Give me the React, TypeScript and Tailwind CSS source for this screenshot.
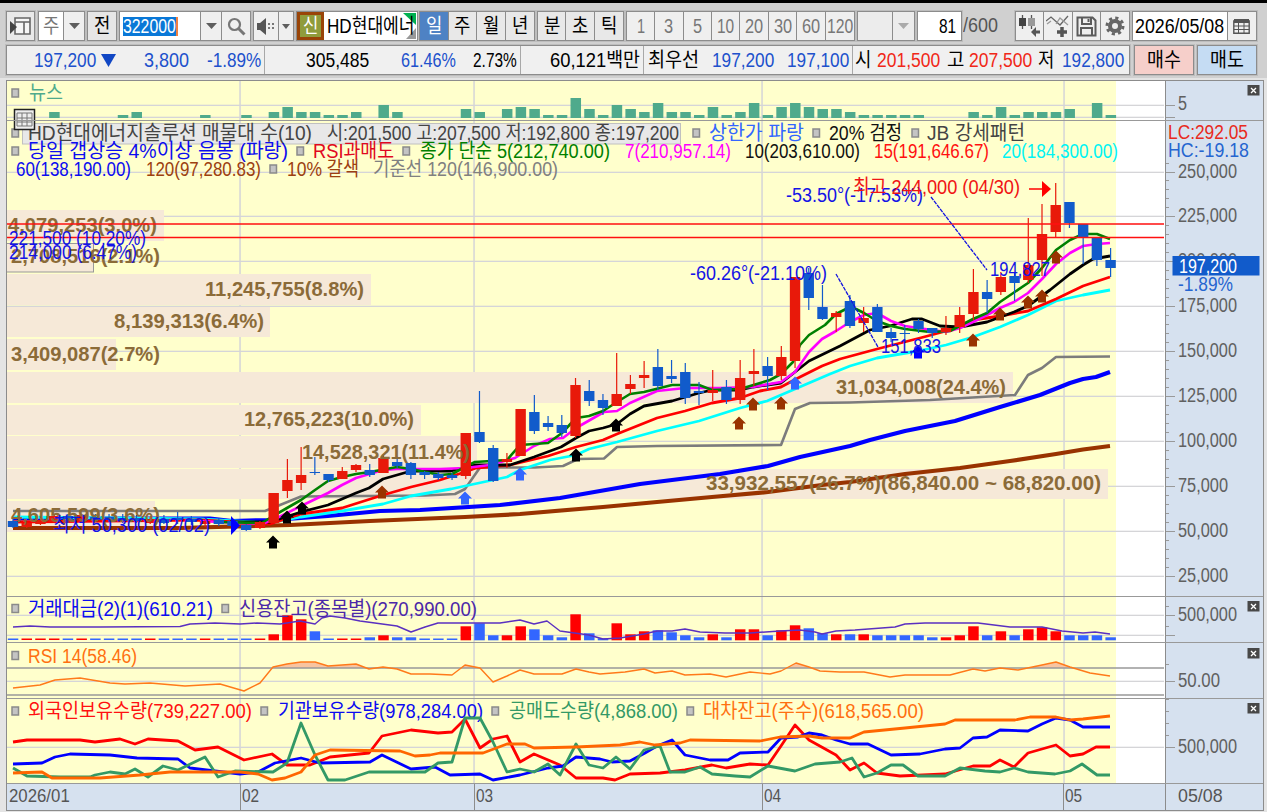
import React, { useLayoutEffect, useRef, useState } from "react";
import clsx from "clsx";

type Pt = [number, number];
type Tone = "R" | "B";

// index, tone, body top, body bottom, high, low
type Candle = [number, Tone, number, number, number, number];

const RED = "#e8190a";
const BLUE = "#115bcb";
const GRID = "#d5d5d8";
const MONTHS = [240, 474, 762, 1064];

const barX = (i: number) => 13 + i * 13.72;

const CANDLES: Candle[] = [
  [0, "B", 521, 527, 519, 528],
  [1, "R", 523, 527, 522, 528],
  [2, "R", 520, 524, 518, 525],
  [3, "R", 516, 522, 514, 523],
  [4, "B", 516, 520, 514, 523],
  [5, "R", 515, 521, 514, 522],
  [6, "B", 517, 520, 514, 522],
  [7, "B", 517, 520, 514, 522],
  [8, "B", 518, 521, 514, 523],
  [9, "B", 518, 521, 515, 523],
  [10, "R", 519, 523, 517, 524],
  [11, "B", 519, 523, 515, 524],
  [12, "B", 518, 520, 512, 524],
  [13, "B", 519, 522, 516, 525],
  [14, "R", 521, 524, 519, 527],
  [15, "B", 520, 524, 518, 526],
  [16, "B", 521, 526, 519, 527],
  [17, "B", 525, 530, 524, 531],
  [18, "R", 522, 528, 521, 529],
  [19, "R", 493, 523, 493, 523],
  [20, "R", 480, 491, 459, 498],
  [21, "R", 475, 483, 447, 490],
  [22, "B", 472, 473, 457, 475],
  [23, "B", 474, 480, 474, 482],
  [24, "R", 471, 479, 467, 479],
  [25, "R", 465, 470, 464, 472],
  [26, "B", 470, 475, 464, 477],
  [27, "R", 458, 473, 454, 473],
  [28, "B", 462, 466, 456, 468],
  [29, "B", 463, 475, 462, 479],
  [30, "B", 472, 475, 471, 479],
  [31, "B", 474, 478, 472, 480],
  [32, "B", 475, 478, 473, 480],
  [33, "R", 433, 476, 433, 479],
  [34, "B", 432, 442, 391, 443],
  [35, "B", 448, 481, 445, 482],
  [36, "R", 459, 462, 453, 468],
  [37, "R", 409, 456, 409, 456],
  [38, "B", 412, 431, 395, 434],
  [39, "B", 423, 427, 416, 431],
  [40, "B", 425, 433, 415, 437],
  [41, "R", 385, 436, 378, 438],
  [42, "B", 391, 401, 380, 406],
  [43, "B", 400, 408, 394, 415],
  [44, "R", 394, 406, 353, 406],
  [45, "R", 384, 389, 375, 394],
  [46, "R", 375, 378, 361, 388],
  [47, "B", 367, 386, 349, 390],
  [48, "B", 376, 379, 360, 383],
  [49, "B", 372, 398, 363, 404],
  [50, "B", 391, 393, 382, 405],
  [51, "R", 390, 393, 370, 401],
  [52, "B", 387, 400, 380, 404],
  [53, "R", 378, 400, 360, 404],
  [54, "R", 371, 374, 349, 386],
  [55, "B", 366, 376, 357, 390],
  [56, "R", 357, 376, 346, 380],
  [57, "R", 277, 361, 277, 368],
  [58, "B", 273, 298, 268, 310],
  [59, "B", 307, 319, 285, 320],
  [60, "R", 313, 317, 311, 332],
  [61, "B", 301, 326, 295, 328],
  [62, "R", 318, 323, 307, 332],
  [63, "B", 307, 332, 304, 332],
  [64, "B", 332, 338, 328, 342],
  [65, "B", 333, 334, 325, 342],
  [66, "B", 321, 329, 319, 333],
  [67, "B", 328, 333, 328, 338],
  [68, "R", 328, 332, 316, 335],
  [69, "R", 315, 327, 307, 333],
  [70, "R", 292, 314, 269, 320],
  [71, "B", 292, 299, 280, 313],
  [72, "R", 277, 292, 272, 295],
  [73, "B", 276, 283, 272, 301],
  [74, "R", 265, 280, 218, 283],
  [75, "R", 234, 260, 204, 276],
  [76, "R", 205, 232, 183, 237],
  [77, "B", 202, 223, 202, 228],
  [78, "B", 224, 237, 224, 264],
  [79, "B", 237, 260, 237, 266],
  [80, "B", 260, 268, 248, 277],
];

const MOVING_AVERAGES = [
  {
    color: "#7c7c7c",
    width: 2.6,
    pts: "13,511 265,511 280,505 301,496.5 425,495.5 455,494 465,489 480,467.5 535,467.5 563,466 578,459 604,458.5 617,447 657,446 781,445 795,409 810,403 850,402.5 930,400 1015,395 1028,375 1042,368 1056,357 1110,356.5",
  },
  {
    color: "#993300",
    width: 4.2,
    pts: "13,528 180,528 290,525 370,521 465,517 520,514 603,507 657,502 712,497 768,492 822,485 850,482 905,474 960,468 1010,461 1056,454 1083,449.5 1110,446",
  },
  {
    color: "#0000ff",
    width: 4.2,
    pts: "13,518.5 210,518.5 232,521 273,520 301,518 328,516 380,511 420,510 500,505 560,498 600,491 640,484 680,479 720,474 768,466 800,457 850,446 870,440 905,431 955,421 1000,407 1040,395 1070,383 1083,379 1096,377 1110,372",
  },
  {
    color: "#00ffff",
    width: 2.8,
    pts: "13,517 200,519 270,523 301,517 342,511 383,504 411,496 451,489 465,486 493,480 507,477 520,470 550,460 576,455 589,449 617,442 657,431 699,421 740,408 767,401 795,389 809,383 830,374 850,366 877,358 918,351 946,345 973,337 1000,327 1028,315 1056,301 1083,295 1110,290",
  },
  {
    color: "#ff0000",
    width: 2.8,
    pts: "13,522 200,520 270,524 301,514 342,508 383,495 411,487 440,480 465,472 476,468 510,465 548,456 576,447 603,440 617,434 657,418 685,411 712,403 740,398 760,391 781,387 800,377 822,366 840,359 877,349 920,338 950,330 973,320 1000,316 1028,311 1056,299 1083,286 1110,277",
  },
  {
    color: "#000000",
    width: 2.8,
    pts: "230,522 270,522 301,512 328,505 356,493 369,488 383,479 411,471 451,471 475,465 510,465 534,457 561,447 576,438 589,431 603,428 617,424 630,414 644,406 672,401 699,393 712,390 740,390 753,387 781,383 795,372 809,361 840,346 870,330 890,326 912,319 922,319 940,326 960,327 987,322 1014,312 1028,306 1050,290 1070,274 1083,265 1093,259 1110,256",
  },
  {
    color: "#ff00ff",
    width: 2.6,
    pts: "200,521 262,524 275,519 301,506 328,493 342,485 356,478 383,470 397,469 440,469 465,468 490,465 515,458 534,446 550,439 563,438 576,428 590,420 604,412 617,411 630,403 657,391 685,388 720,388 753,387 781,382 795,372 809,352 822,339 836,331 850,322 864,315 877,313 891,321 905,326 918,328 932,330 946,332 960,328 973,322 987,315 1000,308 1014,302 1028,293 1042,279 1056,264 1070,253 1083,246 1097,244 1110,243",
  },
  {
    color: "#008000",
    width: 2.6,
    pts: "215,522 262,523 273,516 287,508 301,500 315,490 328,481 342,477 356,474 370,472 397,467 411,469 440,475 452,474 465,467 475,462 507,460 520,445 548,443 562,433 576,418 589,416 603,411 617,402 630,394 644,392 672,385 699,385 712,390 740,389 770,380 781,374 793,362 800,345 809,335 825,325 836,314 848,308 856,309 864,313 877,321 891,326 905,329 930,332 950,331 973,319 987,313 1000,302 1028,283 1042,268 1056,250 1070,240 1083,234 1097,234 1110,239",
  },
];

// y, height, right edge, label, label x, label width, baseline
const PROFILE: [number, number, number, string, number, number, number][] = [
  [210, 31, 164, "4,079,253(3.0%)", 8, 149, 232],
  [243, 29, 93, "2,708,516(2.1%)", 11, 149, 263],
  [274, 31, 371, "11,245,755(8.8%)", 205, 159, 296],
  [307, 30, 270, "8,139,313(6.4%)", 114, 150, 328],
  [339, 31, 116, "3,409,087(2.7%)", 11, 149, 361],
  [372, 31, 1013, "31,034,008(24.4%)", 836, 170, 394],
  [405, 30, 421, "12,765,223(10.0%)", 244, 170, 426],
  [436, 32, 477, "14,528,321(11.4%)", 302, 168, 459],
  [469, 30, 1108, "33,932,557(26.7%)(86,840.00 ~ 68,820.00)", 706, 395, 490],
  [501, 31, 155, "4,605,599(3.6%)", 11, 149, 522],
];

const ARROWS: { color: string; at: Pt[] }[] = [
  { color: "#000000", at: [[273, 542], [287, 517], [302, 508], [576, 455], [616, 425]] },
  {
    color: "#993300",
    at: [[382, 492], [739, 423], [753, 404], [781, 403], [973, 340], [1000, 314], [1028, 302], [1042, 296], [1056, 257]],
  },
  { color: "#3366ff", at: [[465, 498], [520, 474], [795, 383]] },
  { color: "#0000ff", at: [[918, 352]] },
];

// bar index, bar height
const NEWS: Pt[] = [
  [3, 6], [8, 3], [9, 6], [14, 3], [17, 3], [19, 6], [20, 11], [21, 6], [22, 6], [23, 3], [24, 3], [25, 6],
  [27, 13], [28, 6], [33, 9], [34, 6], [36, 9], [37, 11], [38, 9], [39, 3], [40, 3], [41, 20], [42, 9], [43, 3],
  [44, 13], [45, 9], [46, 6], [47, 15], [48, 6], [49, 6], [50, 3], [51, 11], [52, 3], [53, 6], [54, 15], [55, 3],
  [56, 11], [57, 15], [58, 11], [59, 9], [60, 9], [61, 6], [62, 3], [63, 3], [64, 3], [65, 3], [66, 3], [70, 6],
  [71, 3], [72, 11], [73, 3], [74, 6], [75, 6], [76, 6], [77, 9], [79, 15], [80, 3],
];

const VOLUME_TONES =
  "BRRRBRBBBBRBBBRBBBRRRRBBRRBRBBBBBRBBRRBBBRBBRRRBBBBRBRRBRRBBRBRBBBBBRRRBRBRRRBBBB";

const VOLUME = [
  1, 1, 1, 1, 1, 1, 1, 1, 1, 1, 1, 1, 1, 1, 1, 1, 1, 1, 1, 6, 25, 21, 9, 1, 1, 1, 3, 5, 3, 3, 1, 1, 1, 14, 17, 5, 5,
  14, 11, 5, 3, 26, 7, 2, 17, 6, 9, 10, 8, 5, 3, 6, 3, 11, 11, 5, 10, 15, 12, 7, 6, 6, 6, 5, 5, 5, 5, 3, 3, 5, 14, 5,
  9, 5, 11, 13, 9, 5, 5, 5, 3,
];

const CREDIT =
  "13,627 30,626 50,627 100,627 180,626.5 190,624 215,623 240,624 257,623 280,624 300,621 315,624 322,618 330,616 345,618 360,621 397,626 411,632 425,627 438,623 500,623 520,620 534,624 547,621 560,631 589,635 603,639 620,638 644,634 657,631 672,631 685,629 700,632 725,633 750,633 780,631 800,630 815,632 822,634 836,631 855,630 895,627 905,624 925,623 978,623 1010,627 1042,627 1062,631 1083,633 1095,632 1110,634";

const RSI =
  "13,688 40,685 55,680 80,678 110,683 125,684 150,683 185,686 220,684 244,691 260,683 273,667 287,664 301,662 315,662 328,666 356,664 369,669 383,667 397,669 411,674 430,674 452,675 465,665 480,668 493,682 507,676 520,670 534,674 562,674 576,669 589,672 600,674 625,672 644,669 655,673 672,671 685,675 710,674 726,677 750,672 770,674 781,671 796,663 809,667 820,671 840,672 864,672 890,677 905,675 950,675 973,669 985,671 1000,668 1018,670 1042,665 1056,662 1070,667 1090,673 1110,676";

const HOLDINGS = [
  {
    color: "#ff0000",
    pts: "13,742 27,740 80,740 95,742 120,739 135,744 148,739 178,741 195,750 218,747 244,760 272,754 287,765 310,765 330,757 369,753 382,736 411,730 438,733 452,732 465,719 480,748 493,739 507,736 520,762 534,754 560,765 576,778 603,778 615,780 630,774 660,773 685,770 712,765 726,768 750,764 768,765 781,746 795,725 809,740 836,755 850,770 864,763 877,773 900,776 945,774 973,766 990,766 1000,760 1014,767 1028,753 1056,745 1070,756 1083,754 1096,747 1110,747",
  },
  {
    color: "#0000ff",
    pts: "13,764 42,763 55,757 70,754 110,755 137,758 178,759 190,768 240,774 258,772 275,763 301,758 320,763 370,762 382,755 411,769 435,767 450,775 480,774 493,780 520,775 548,768 563,766 576,757 600,759 612,762 630,761 645,753 657,746 672,740 685,755 710,760 728,760 740,753 768,752 781,738 798,737 809,733 822,735 836,740 850,744 868,744 891,755 920,754 945,749 960,748 973,738 987,737 1000,730 1028,731 1042,724 1056,718 1070,720 1083,727 1110,727",
  },
  {
    color: "#339966",
    pts: "13,768 27,776 60,777 90,777 95,775 110,772 125,774 135,769 148,777 163,766 178,770 205,757 218,777 235,771 273,772 287,763 301,723 315,755 328,780 345,780 369,772 425,772 438,763 452,762 465,718 480,718 493,742 507,772 520,769 534,772 548,764 560,775 576,744 589,765 603,768 616,757 630,769 644,750 660,746 670,772 685,772 700,767 712,774 735,776 750,777 768,766 795,771 815,764 840,762 852,758 864,777 877,773 891,765 903,765 918,776 945,776 960,768 985,771 1000,772 1014,768 1028,772 1055,774 1070,771 1082,764 1097,775 1110,775",
  },
  {
    color: "#ff6600",
    pts: "13,773 42,772 52,778 100,778 140,775 170,772 240,772 258,774 272,780 285,778 301,772 315,755 330,750 400,751 415,756 430,755 440,753 483,753 507,744 525,744 534,748 576,747 620,745 640,742 655,745 680,743 690,740 760,741 780,737 809,736 822,738 850,738 864,732 905,728 945,724 955,720 1015,720 1030,717 1056,717 1070,720 1083,719 1110,716",
  },
];

const PRICES: [string, number][] = [
  ["250,000", 172],
  ["225,000", 216],
  ["200,000", 261],
  ["175,000", 306],
  ["150,000", 351],
  ["125,000", 396],
  ["100,000", 441],
  ["75,000", 486],
  ["50,000", 531],
  ["25,000", 576],
];

/* ---------- toolbar ---------- */

// Condenses a line of text to the width of its box.
const Fit = ({ className, children }: { className: string; children: string }) => {
  const box = useRef<HTMLSpanElement>(null);
  const inner = useRef<HTMLSpanElement>(null);
  const [scale, setScale] = useState(1);

  useLayoutEffect(() => {
    if (!box.current || !inner.current) return;
    setScale(box.current.clientWidth / inner.current.offsetWidth);
  }, [children]);

  return (
    <span ref={box} className={clsx("inline-block shrink-0 text-left", className)}>
      <span
        ref={inner}
        className="inline-block origin-left whitespace-pre"
        style={{ transform: `scaleX(${scale})` }}
      >
        {children}
      </span>
    </span>
  );
};

const Group = ({ className, children }: { className?: string; children: React.ReactNode }) => (
  <div
    className={clsx(
      "flex h-[30px] shrink-0 divide-x divide-[#8c8c8c] border border-[#8c8c8c] outline outline-[#bdbdbd]",
      className
    )}
  >
    {children}
  </div>
);

const Cell = ({ className, children }: { className: string; children?: React.ReactNode }) => (
  <div className={clsx("flex shrink-0 items-center justify-center", className)}>{children}</div>
);

const Caret = ({ small, color = "#5e5e5e" }: { small?: boolean; color?: string }) => (
  <svg width={small ? 8 : 11} height={small ? 5 : 6} viewBox="0 0 10 6" preserveAspectRatio="none">
    <path d="M0 0h10L5 6z" fill={color} />
  </svg>
);

const PERIODS = [
  { label: "일", active: true },
  { label: "주" },
  { label: "월" },
  { label: "년" },
];
const UNITS = ["분", "초", "틱"];
const MINUTES: { label: string; w: string }[] = [
  { label: "1", w: "w-[8px]" },
  { label: "3", w: "w-[9px]" },
  { label: "5", w: "w-[9px]" },
  { label: "10", w: "w-[17px]" },
  { label: "20", w: "w-[18px]" },
  { label: "30", w: "w-[18px]" },
  { label: "60", w: "w-[18px]" },
  { label: "120", w: "w-[26px]" },
];

const Toolbar = () => (
  <div className="flex h-[38px] items-start pt-[7px] pl-[6px] text-[20px] leading-[28px] text-black">
    <Group>
      <Cell className="w-[27px] bg-[#e9e9e9]">
        <svg width="21" height="20" viewBox="0 0 21 20">
          <path d="M5 2h15v16H5z" fill="#f6f6f6" stroke="#666" strokeWidth="1.6" />
          <path d="M5 6h15M14 6v12" stroke="#666" strokeWidth="1.6" />
          <path d="M0 5l7 6-7 7z" fill="#444" />
        </svg>
      </Cell>
    </Group>
    <Group className="ml-[3px]">
      <Cell className="w-[25px] bg-white text-[#777]"><Fit className="w-[16px]">주</Fit></Cell>
      <Cell className="w-[20px] bg-[#efefef]"><Caret /></Cell>
    </Group>
    <Group className="ml-[2px]">
      <Cell className="w-[28px] bg-[#e6e6e6]"><Fit className="w-[16px]">전</Fit></Cell>
    </Group>
    <Group className="ml-[2px]">
      <Cell className="w-[81px] justify-start! bg-white pl-[3px]">
        <span className="flex h-[19px] items-center border-r-2 border-[#f08040] bg-[#0a78d7] text-white">
          <Fit className="w-[53px]">322000</Fit>
        </span>
      </Cell>
      <Cell className="w-[21px] bg-[#efefef]"><Caret /></Cell>
      <Cell className="w-[28px] bg-[#efefef]">
        <svg width="19" height="19" viewBox="0 0 19 19" fill="none" stroke="#777">
          <circle cx="7.5" cy="7.5" r="5.5" strokeWidth="2.2" />
          <path d="M11.5 11.5l6 6" strokeWidth="3" />
        </svg>
      </Cell>
    </Group>
    <Group className="ml-[2px]">
      <Cell className="w-[25px] bg-[#efefef]">
        <svg width="18" height="17" viewBox="0 0 18 17">
          <path d="M0 5h3l6-5v17l-6-5H0z" fill="#555" />
          <path d="M11 6h2M11 10h2M15 6h2M15 10h2" stroke="#777" strokeWidth="2" />
        </svg>
      </Cell>
      <Cell className="w-[14px] bg-[#efefef]"><Caret small /></Cell>
    </Group>
    <Group className="ml-[2px]">
      <Cell className="w-[27px] border-3 border-[#994408]! bg-[#8f9c3c] text-white">
        <Fit className="w-[15px]">신</Fit>
      </Cell>
      <Cell className="relative w-[93px] bg-white">
        <svg className="absolute top-px right-px" width="13" height="26" viewBox="0 0 13 26">
          <path d="M0 0h13v12z" fill="#00b050" />
          <path d="M13 15v11H3z" fill="#999" />
        </svg>
        <span className="relative flex"><Fit className="w-[88px]">HD현대에너</Fit></span>
      </Cell>
    </Group>
    <Group className="ml-[1px]">
      {PERIODS.map((p) => (
        <Cell
          key={p.label}
          className={clsx("w-[28.5px]", p.active ? "bg-[#4e82c4] text-white" : "bg-[#e8e8e8]")}
        >
          <Fit className="w-[16px]">{p.label}</Fit>
        </Cell>
      ))}
    </Group>
    <Group className="ml-[2px]">
      {UNITS.map((u) => (
        <Cell key={u} className="w-[28.3px] bg-[#e8e8e8]"><Fit className="w-[16px]">{u}</Fit></Cell>
      ))}
    </Group>
    <Group className="ml-[2px]">
      {MINUTES.map((m) => (
        <Cell key={m.label} className="w-[28.4px] bg-[#efefef] text-[#777]"><Fit className={m.w}>{m.label}</Fit></Cell>
      ))}
    </Group>
    <Group className="ml-[2px]">
      <Cell className="w-[35px] bg-[#ececec]" />
      <Cell className="w-[21px] bg-[#ececec]"><Caret color="#aaa" /></Cell>
    </Group>
    <Group className="ml-[2px]">
      <Cell className="w-[43px] justify-end! bg-white pr-[5px]"><Fit className="w-[17px]">81</Fit></Cell>
    </Group>
    <Fit className="ml-[1px] w-[35px] self-start text-[#555]">/600</Fit>
    <Group className="ml-[17px]">
      <Cell className="w-[28px] bg-[#efefef]">
        <svg width="23" height="22" viewBox="0 0 23 22">
          <path d="M4.5 0v14M13.5 0v14" stroke="#555" strokeWidth="1.3" />
          <path d="M1 3h7v8H1z" fill="#444" />
          <path d="M10 3h7v8h-7z" fill="#999" />
          <path d="M13 17l5-5v3.5h4v3h-4V22z" fill="#555" />
        </svg>
      </Cell>
      <Cell className="w-[28.5px] bg-[#efefef]">
        <svg width="23" height="22" viewBox="0 0 23 22" fill="none">
          <path d="M0 6l5-4 9 8 8-9" stroke="#666" strokeWidth="1.3" />
          <path d="M1 9l4-3M10 9l4-6 8 7" stroke="#999" strokeWidth="1.3" />
          <path d="M16 12v10M11 17h10" stroke="#555" strokeWidth="3.5" />
        </svg>
      </Cell>
      <Cell className="w-[28px] bg-[#efefef]">
        <svg width="21" height="21" viewBox="0 0 21 21" fill="none" stroke="#5c5c5c" strokeWidth="2">
          <path d="M1.5 1.500h15l3 3v15h-18z" />
          <path d="M6 2v6h9V2M5 19v-7h11v7" />
          <path d="M12.5 3v3" />
        </svg>
      </Cell>
      <Cell className="w-[28px] bg-[#efefef]">
        <svg width="20" height="20" viewBox="0 0 20 20" fill="none" stroke="#666">
          <circle cx="10" cy="10" r="5" strokeWidth="4" />
          <circle cx="10" cy="10" r="8" strokeWidth="3" strokeDasharray="3.14 3.14" />
        </svg>
      </Cell>
    </Group>
    <Group className="ml-[2px]">
      <Cell className="w-[95px] bg-white"><Fit className="w-[89px]">2026/05/08</Fit></Cell>
      <Cell className="w-[28px] bg-[#efefef]">
        <svg width="17" height="16" viewBox="0 0 17 16" fill="none" stroke="#555">
          <path d="M.8 3h15.4v12.2H.8z" strokeWidth="1.4" />
          <path d="M1 3h15" strokeWidth="4" />
          <path d="M1 8h15M1 11.5h15M5.500 5v10M11 5v10" strokeWidth="1" />
        </svg>
      </Cell>
    </Group>
  </div>
);

const Divider = () => <span className="ml-[3px] h-full w-px shrink-0 bg-[#a8a8a8]" />;

const QuoteBar = () => (
  <div className="flex h-[30px] pl-[6px] text-[20px] leading-[28px]">
    <div className="flex w-[1124px] shrink-0 border border-[#8c8c8c] bg-[#f0f0f0] text-black outline outline-[#bdbdbd]">
      <Fit className="ml-[27px] w-[62px] text-[#2050cc]">197,200</Fit>
      <svg className="mt-[8px] ml-[5px] shrink-0" width="15" height="13" viewBox="0 0 15 13">
        <path d="M0 0h15L7.5 13z" fill="#1147c4" />
      </svg>
      <Fit className="ml-[28px] w-[45px] text-[#2050cc]">3,800</Fit>
      <Fit className="ml-[18px] w-[54px] text-[#2050cc]">-1.89%</Fit>
      <Divider />
      <Fit className="ml-[41px] w-[63px]">305,485</Fit>
      <Fit className="ml-[32px] w-[55px] text-[#2050cc]">61.46%</Fit>
      <Fit className="ml-[17px] w-[44px]">2.73%</Fit>
      <Divider />
      <Fit className="ml-[29px] w-[90px]">60,121백만</Fit>
      <Divider />
      <Fit className="ml-[4px] w-[51px]">최우선</Fit>
      <Fit className="ml-[13px] w-[62px] text-[#2050cc]">197,200</Fit>
      <Fit className="ml-[13px] w-[62px] text-[#2050cc]">197,100</Fit>
      <Divider />
      <Fit className="ml-[2px] w-[16px]">시</Fit>
      <Fit className="ml-[6px] w-[63px] text-[#f02818]">201,500</Fit>
      <Fit className="ml-[7px] w-[17px]">고</Fit>
      <Fit className="ml-[5px] w-[63px] text-[#f02818]">207,500</Fit>
      <Fit className="ml-[6px] w-[16px]">저</Fit>
      <Fit className="ml-[8px] w-[62px] text-[#2050cc]">192,800</Fit>
    </div>
    <button className="ml-[4px] w-[60px] shrink-0 border border-[#8c8c8c] bg-[#f6cfca] text-black outline outline-[#bdbdbd]">
      <Fit className="w-[34px]">매수</Fit>
    </button>
    <button className="ml-[3px] w-[60px] shrink-0 border border-[#8c8c8c] bg-[#c5dcf3] text-black outline outline-[#bdbdbd]">
      <Fit className="w-[34px]">매도</Fit>
    </button>
  </div>
);

/* ---------- chart ---------- */

type LabelProps = {
  x: number;
  y: number;
  w: number;
  fill: string;
  bold?: boolean;
  children: string;
};

const Label = ({ x, y, w, fill, bold, children }: LabelProps) => (
  <text
    x={x}
    y={y}
    textLength={w}
    lengthAdjust="spacingAndGlyphs"
    fill={fill}
    className={bold ? "text-[20px] font-bold" : "text-[20px]"}
  >
    {children}
  </text>
);

const Marker = ({ x, y }: { x: number; y: number }) => (
  <rect x={x - 3} y={y - 4} width="6.5" height="8" fill="#c4c4c4" stroke="#8a8a8a" strokeWidth="1.5" />
);

const Close = ({ y }: { y: number }) => (
  <g>
    <rect x="1247.5" y={y} width="12" height="10.5" fill="#484848" />
    <path d={`M1251 ${y + 3}l5 5M1256 ${y + 3}l-5 5`} stroke="#fff" strokeWidth="1.3" />
  </g>
);

const Tick = ({ y, minor }: { y: number; minor?: boolean }) => (
  <path d={`M1166 ${y + 0.5}h${minor ? 3 : 9}`} stroke="#999" strokeWidth="1" />
);

type PanelProps = {
  y: number;
  h: number;
  grid?: number[];
  axis: React.ReactNode;
  children: React.ReactNode;
};

const Panel = ({ y, h, grid = [], axis, children }: PanelProps) => (
  <div className="flex border-b border-[#999]">
    <svg className="block shrink-0 bg-white" width="1158" height={h - 1} viewBox={`7 ${y} 1158 ${h - 1}`}>
      <rect x="7" y={y} width="1109" height={h} fill="#ffffcc" />
      {grid.map((g) => (
        <rect key={g} x="7" y={g - 0.3} width="1157" height="1.3" fill={GRID} />
      ))}
      {MONTHS.map((m) => (
        <rect key={m} x={m - 0.7} y={y} width="1.5" height={h} fill={GRID} />
      ))}
      {children}
    </svg>
    <div className="shrink-0 border-l border-[#8c8c8c] bg-[#d6e1ef]">
      <svg className="block" width="97" height={h - 1} viewBox={`1166 ${y} 97 ${h - 1}`}>
        {axis}
      </svg>
    </div>
  </div>
);

const Line = ({ pts, color, width }: { pts: string; color: string; width: number }) => (
  <polyline points={pts} fill="none" stroke={color} strokeWidth={width} strokeLinejoin="round" />
);

const NewsPanel = () => (
  <Panel
    y={81}
    h={40}
    grid={[105, 117]}
    axis={
      <>
        <Tick y={105} />
        <Tick y={117} />
        <Label x={1178} y={110} w={9} fill="#606060">5</Label>
        <Close y={85} />
      </>
    }
  >
    {NEWS.map(([i, h]) => (
      <rect key={i} x={barX(i) - 5} y={118 - h} width="10.5" height={h} fill="#4faa8c" />
    ))}
    <Marker x={15} y={93} />
    <Label x={29} y={100} w={34} fill="#4faa8c">뉴스</Label>
    <rect x="14.5" y="109.5" width="20" height="20" fill="#eee" stroke="#222" strokeWidth="1.5" />
    <path d="M17 113h15M17 118h15M17 113v13M22 113v13M27 113v13M32 113v13" stroke="#777" />
  </Panel>
);

const PricePanel = () => (
  <Panel
    y={121}
    h={476}
    grid={PRICES.map(([, y]) => y)}
    axis={
      <>
        {PRICES.map(([, y]) => (
          <g key={y}>
            <Tick y={y} />
            {[9, 18, 27, 36].map((d) => (y - d > 160 ? <Tick key={d} y={y - d} minor /> : null))}
          </g>
        ))}
        {PRICES.map(([t, y]) => (
          <Label key={t} x={1178} y={y + 6} w={t.length === 7 ? 59 : 50} fill="#606060">{t}</Label>
        ))}
        <Label x={1168} y={139} w={80} fill="#e82a20">LC:292.05</Label>
        <Label x={1168} y={157} w={81} fill="#2565d0">HC:-19.18</Label>
        <rect x="1172.5" y="256" width="87" height="19.5" fill="#115bcb" />
        <Label x={1179} y={272.5} w={58} fill="#fff">197,200</Label>
        <Label x={1178} y={291} w={55} fill="#2565d0">-1.89%</Label>
      </>
    }
  >
    {PROFILE.map(([y, h, right]) => (
      <rect key={y} x="7" y={y} width={right - 7} height={h} fill="#f6e9d8" />
    ))}
    <rect x="6.5" y="243.5" width="87" height="28.5" fill="none" stroke="#999" />

    {MOVING_AVERAGES.map((m) => (
      <Line key={m.color} pts={m.pts} color={m.color} width={m.width} />
    ))}

    {CANDLES.map(([i, tone, top, bottom, high, low]) => (
      <g key={i} fill={tone === "R" ? RED : BLUE}>
        <rect x={barX(i) - 0.6} y={high} width="1.2" height={low - high} />
        <rect x={barX(i) - 5.2} y={top} width="10.4" height={bottom - top} />
      </g>
    ))}

    {PROFILE.map(([y, , , text, x, w, base]) => (
      <Label key={y} x={x} y={base} w={w} fill="#8b6b38" bold>{text}</Label>
    ))}

    <path d="M7 224h1157M7 237.5h1157" stroke="#ff1010" strokeWidth="1.5" />

    {ARROWS.map((a) =>
      a.at.map(([x, y]) => (
        <path key={`${x}-${y}`} d={`M${x} ${y - 6.5}l7 7h-3v6h-8v-6h-3z`} fill={a.color} />
      ))
    )}

    <path d="M931 197l56 73M836 274l42 73" stroke="#1414e0" strokeWidth="1.3" strokeDasharray="4 1" />
    <path d="M231 516v19l9-9.5z" fill="#0000ff" />
    <Label x={786} y={202} w={137} fill="#1414e6">-53.50°(-17.53%)</Label>
    <Label x={690} y={280} w={137} fill="#1414e6">-60.26°(-21.10%)</Label>
    <Label x={990} y={276} w={60} fill="#1414e6">194,827</Label>
    <Label x={881} y={353} w={60} fill="#1414e6">151,833</Label>
    <Label x={9} y={245} w={137} fill="#1414e6">221,500 (10.20%)</Label>
    <Label x={9} y={259} w={128} fill="#1414e6">214,000 (6.47%)</Label>
    <Label x={53} y={532} w={157} fill="#1414e6">최저 50,300 (02/02)</Label>
    <Label x={853} y={194} w={167} fill="#f01414">최고 244,000 (04/30)</Label>
    <path d="M1029 189h14" stroke="#ff0000" strokeWidth="1.5" />
    <path d="M1042 181v16l9-8z" fill="#ff0000" />

    {/* indicator legend */}
    <rect x="22.5" y="123.5" width="658" height="20.5" fill="#e8e8e8" stroke="#c0c0c0" />
    <Marker x={15} y={133} />
    <Label x={28} y={140} w={284} fill="#444">HD현대에너지솔루션 매물대 수(10)</Label>
    <Label x={327} y={140} w={352} fill="#444">시:201,500 고:207,500 저:192,800 종:197,200</Label>
    <path d="M14.5 120v9.5h20V120" fill="#eee" stroke="#222" strokeWidth="1.5" />
    <path d="M17 122h15M17 126h15M17 121v5M22 121v5M27 121v5M32 121v5" stroke="#777" />
    <Marker x={696} y={133} />
    <Label x={709} y={140} w={95} fill="#3366ff">상한가 파랑</Label>
    <Marker x={816} y={133} />
    <Label x={829} y={140} w={73} fill="#111">20% 검정</Label>
    <Marker x={915} y={133} />
    <Label x={927} y={140} w={98} fill="#444">JB 강세패턴</Label>

    <Marker x={15} y={151} />
    <Label x={28} y={158} w={260} fill="#0c0cf0">당일 갭상승 4%이상 음봉 (파랑)</Label>
    <Marker x={300} y={151} />
    <Label x={313} y={158} w={81} fill="#e00820">RSI과매도</Label>
    <Marker x={406} y={151} />
    <Label x={420} y={158} w={190} fill="#008000">종가 단순 5(212,740.00)</Label>
    <Label x={625} y={158} w={106} fill="#ff00ff">7(210,957.14)</Label>
    <Label x={745} y={158} w={115} fill="#111">10(203,610.00)</Label>
    <Label x={874} y={158} w={115} fill="#ff1010">15(191,646.67)</Label>
    <Label x={1002} y={158} w={116} fill="#00f4f4">20(184,300.00)</Label>

    <Label x={16} y={176} w={115} fill="#0c0cf0">60(138,190.00)</Label>
    <Label x={146} y={176} w={115} fill="#9c4010">120(97,280.83)</Label>
    <Marker x={273} y={169} />
    <Label x={287} y={176} w={72} fill="#9c4010">10% 갈색</Label>
    <Label x={373} y={176} w={185} fill="#808080">기준선 120(146,900.00)</Label>
  </Panel>
);

const VolumePanel = () => (
  <Panel
    y={597}
    h={46}
    grid={[615, 635]}
    axis={
      <>
        <Tick y={606} minor />
        <Tick y={615} />
        <Tick y={626} minor />
        <Tick y={635} />
        <Label x={1178} y={621} w={59} fill="#606060">500,000</Label>
        <Close y={601} />
      </>
    }
  >
    {VOLUME.map((h, i) => (
      <rect
        key={i}
        x={barX(i) - 5.2}
        y={(h === 1 ? 639.5 : 640.3) - h}
        width="10.5"
        height={h === 1 ? 1.5 : h}
        fill={VOLUME_TONES[i] === "R" ? "#ff0000" : "#3366ff"}
      />
    ))}
    <Line pts={CREDIT} color="#5a30c0" width={1.4} />
    <Marker x={15} y={608.5} />
    <Label x={28} y={616} w={185} fill="#0c0cf0">거래대금(2)(1)(610.21)</Label>
    <Marker x={225} y={608.5} />
    <Label x={239} y={616} w={238} fill="#4c28a8">신용잔고(종목별)(270,990.00)</Label>
  </Panel>
);

const RsiPanel = () => (
  <Panel
    y={643}
    h={56}
    grid={[681]}
    axis={
      <>
        <Tick y={664} minor />
        <Tick y={681} />
        <Label x={1178} y={687} w={42} fill="#606060">50.00</Label>
        <Close y={648} />
      </>
    }
  >
    <clipPath id="overbought">
      <rect x="7" y="643" width="1157" height="25" />
    </clipPath>
    <polygon points={`13,695 ${RSI} 1110,695`} fill="#f8c4a0" clipPath="url(#overbought)" />
    <path d="M7 668h1157M7 695h1157" stroke="#999" strokeWidth="1.5" />
    <Line pts={RSI} color="#ff7a1a" width={1.4} />
    <Marker x={15} y={655.5} />
    <Label x={28} y={663} w={109} fill="#ff7010">RSI 14(58.46)</Label>
  </Panel>
);

const HoldingsPanel = () => (
  <Panel
    y={699}
    h={85}
    grid={[747]}
    axis={
      <>
        {[699, 711, 723, 735].map((y) => (
          <Tick key={y} y={y} minor />
        ))}
        <Tick y={747} />
        <Label x={1178} y={753} w={59} fill="#606060">500,000</Label>
        <Close y={703} />
      </>
    }
  >
    <Marker x={15} y={711} />
    <Label x={28} y={718} w={224} fill="#ff1010">외국인보유수량(739,227.00)</Label>
    <Marker x={264} y={711} />
    <Label x={278} y={718} w={205} fill="#0c0cf0">기관보유수량(978,284.00)</Label>
    <Marker x={495} y={711} />
    <Label x={509} y={718} w={169} fill="#339966">공매도수량(4,868.00)</Label>
    <Marker x={690} y={711} />
    <Label x={703} y={718} w={221} fill="#ff7010">대차잔고(주수)(618,565.00)</Label>
    {HOLDINGS.map((s) => (
      <Line key={s.color} pts={s.pts} color={s.color} width={2.8} />
    ))}
  </Panel>
);

const DateAxis = () => (
  <div className="flex h-[26px] bg-[#d6e1ef] text-[19px] leading-[24px] text-[#555]">
    <div className="w-[233px] shrink-0 pl-[2px]"><Fit className="w-[61px]">2026/01</Fit></div>
    <div className="w-[234px] shrink-0 border-l border-[#8c8c8c] pl-px"><Fit className="w-[17px]">02</Fit></div>
    <div className="w-[288px] shrink-0 border-l border-[#8c8c8c] pl-px"><Fit className="w-[17px]">03</Fit></div>
    <div className="w-[301px] shrink-0 border-l border-[#8c8c8c] pl-px"><Fit className="w-[17px]">04</Fit></div>
    <div className="w-[102px] shrink-0 border-l border-[#8c8c8c] pl-px"><Fit className="w-[17px]">05</Fit></div>
    <div className="grow border-l border-[#8c8c8c] pl-[12px]"><Fit className="w-[45px]">05/08</Fit></div>
  </div>
);

export default function App() {
  return (
    <div className="h-[812px] w-[1267px] overflow-hidden border-t-3 border-black bg-[#d0d0d0] font-['Liberation_Sans','Noto_Sans_CJK_KR',sans-serif]">
      <div className="pt-px">
        <Toolbar />
        <div className="pt-[3px]">
          <QuoteBar />
        </div>
      </div>
      <div className="mt-[3px] flex h-[734px] bg-[#e4e4e4] pt-[2px] pl-[6px]">
        <div className="h-[731px] w-[1258px] shrink-0 border border-[#8c8c8c] bg-white">
          <NewsPanel />
          <PricePanel />
          <VolumePanel />
          <RsiPanel />
          <HoldingsPanel />
          <DateAxis />
        </div>
      </div>
    </div>
  );
}
